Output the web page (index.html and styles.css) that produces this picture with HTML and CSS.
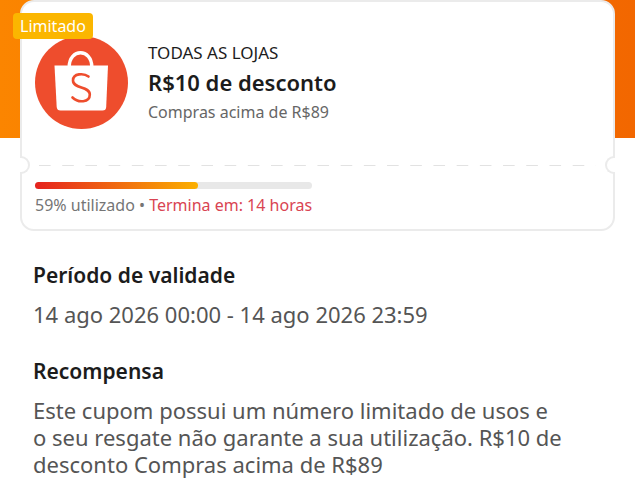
FILE: index.html
```html
<!DOCTYPE html>
<html lang="pt-BR">
<head>
    <meta charset="UTF-8">
    <meta name="viewport" content="width=device-width, initial-scale=1.0">
    <title>Cupom</title>
    <link rel="stylesheet" href="styles.css">
</head>
<body>
    <main class="page">
        <article class="coupon">
            <span class="badge">Limitado</span>

            <div class="coupon-main">
                <svg class="logo" viewBox="0 0 93 93" aria-hidden="true">
                    <circle cx="46.5" cy="46.5" r="46.5" fill="#ee4d2d"/>
                    <path d="M34.2 31 C34.2 12 56.8 12 56.8 31" fill="none" stroke="#fff" stroke-width="3.4"/>
                    <path d="M19.5 29.5 H73 L71.200 71 Q71 74.500 67.500 74.500 H25.500 Q22 74.500 21.700 71 Z" fill="#fff"/>
                    <path d="M53.500 40.500 C49 37 38 37 38 44.500 C38 53 54.800 50 54.800 58.500 C54.800 66.800 43 67 37.500 61.500" fill="none" stroke="#ee4d2d" stroke-width="2.6" stroke-linecap="round"/>
                </svg>
                <div class="coupon-text">
                    <p class="scope">TODAS AS LOJAS</p>
                    <h1>R$10 de desconto</h1>
                    <p class="minimum">Compras acima de R$89</p>
                </div>
            </div>

            <div class="tear">
                <span class="notch notch-left"></span>
                <span class="dashes"></span>
                <span class="notch notch-right"></span>
            </div>

            <div class="usage">
                <progress id="used" value="59" max="100"></progress>
                <label for="used">59% utilizado • <span class="ends">Termina em: 14 horas</span></label>
            </div>
        </article>

        <section class="details">
            <h2>Período de validade</h2>
            <p>14 ago 2026 00:00 - 14 ago 2026 23:59</p>
            <h2>Recompensa</h2>
            <p>Este cupom possui um número limitado de usos e<br>o seu resgate não garante a sua utilização. R$10 de desconto Compras acima de R$89</p>
        </section>
    </main>
</body>
</html>
```

FILE: styles.css
```css
* {
    margin: 0;
    padding: 0;
    box-sizing: border-box;
}

body {
    font-family: 'Noto Sans', 'Open Sans', sans-serif;
    background: #fff;
    color: #1c1c1c;
}

.page {
    padding: 0 20px;
    background: linear-gradient(90deg, #fb8500, #f26700) no-repeat;
    background-size: 100% 138px;
}

.coupon {
    position: relative;
    background: #fff;
    border: 2px solid #ebebeb;
    border-radius: 14px;
}

/* sticks out over the top left corner */
.badge {
    position: absolute;
    top: 11px;
    left: -9px;
    padding: 0 7px;
    border-radius: 4px;
    background: #fbb600;
    color: #fff;
    font-size: 16px;
    line-height: 26px;
}

.coupon-main {
    display: flex;
    align-items: center;
    gap: 20px;
    padding: 34px 13px 27px;
}

.logo {
    flex: none;
    width: 93px;
    height: 93px;
}

.scope {
    font-size: 17px;
    line-height: 26px;
}

h1 {
    font-size: 22px;
    font-weight: 600;
    line-height: 32px;
}

.minimum {
    color: #666;
    font-size: 16px;
    line-height: 28px;
}

.tear {
    display: flex;
    align-items: center;
    justify-content: space-between;
    margin: 0 -2px;
}

.notch {
    width: 10px;
    height: 18px;
    border: 2px solid #ebebeb;
    background: #fff;
}

.notch-left {
    border-left: none;
    border-radius: 0 9px 9px 0;
}

.notch-right {
    border-right: none;
    border-radius: 9px 0 0 9px;
}

.dashes {
    flex: 1;
    height: 1px;
    margin: 0 9px;
    background: linear-gradient(90deg, #e2e2e2 50%, transparent 50%) round;
    background-size: 23px 1px;
}

.usage {
    display: flex;
    flex-direction: column;
    width: fit-content;
    padding: 8px 13px;
    color: #757575;
    font-size: 16px;
    line-height: 32px;
}

progress {
    display: block;
    width: 100%;
    height: 7px;
    border: none;
    border-radius: 4px;
    appearance: none;
}

progress::-webkit-progress-bar {
    border-radius: 4px;
    background: #e8e8e8;
}

progress::-webkit-progress-value {
    border-radius: 4px;
    background: linear-gradient(90deg, #e5231f, #fbb000);
}

.ends {
    color: #d94452;
}

.details {
    padding: 28px 13px 20px;
}

h2 {
    font-size: 21px;
    font-weight: 600;
    line-height: 32px;
}

.details p {
    color: #555;
    font-size: 22px;
    line-height: 27px;
    margin: 10px 0 27px;
}

.details p:last-child {
    margin-bottom: 0;
}
```
